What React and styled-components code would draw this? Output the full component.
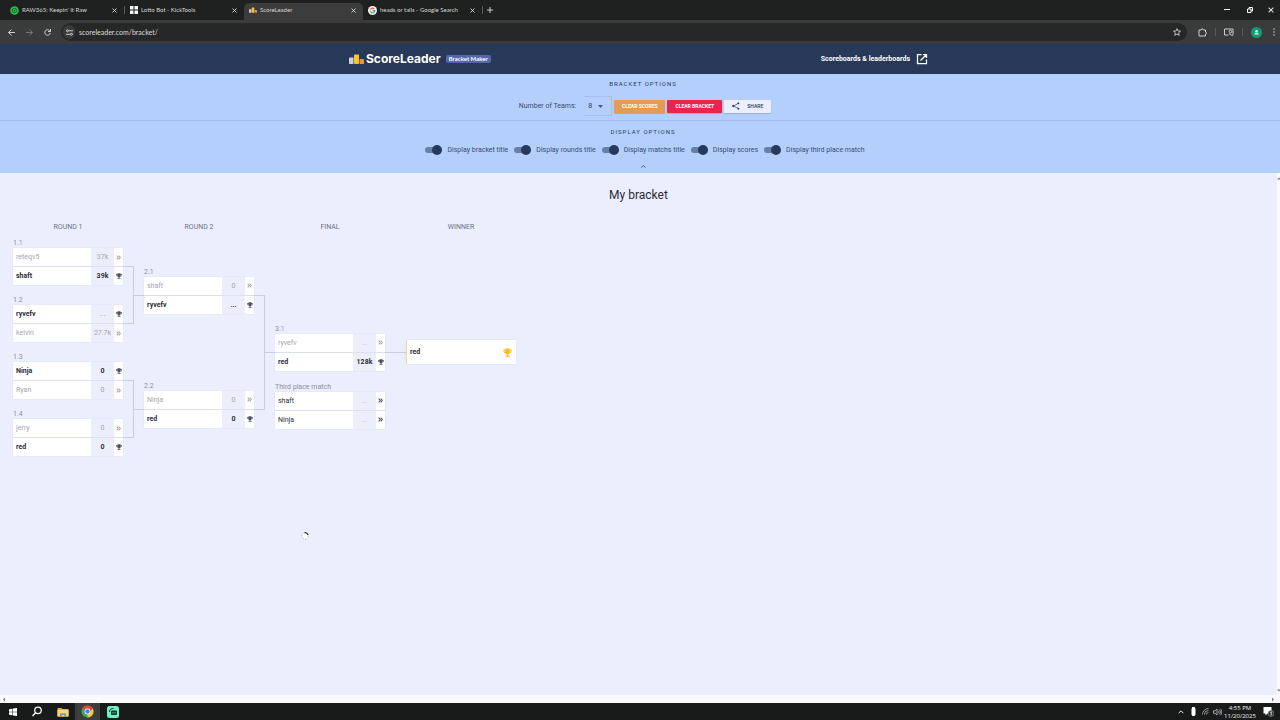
import React, { useState } from 'react';
import styled, { createGlobalStyle } from 'styled-components';

const GlobalStyle = createGlobalStyle`
  *, *::before, *::after {
    box-sizing: border-box;
  }

  body {
    margin: 0;
    font-family: Roboto, "Liberation Sans", sans-serif;
    font-size: 7px;
    line-height: 10px;
    color: #2b3a5c;
    background-color: #ebeefd;
  }

  button, input, select {
    font: inherit;
    color: inherit;
    margin: 0;
    padding: 0;
    border: 0;
    background: none;
  }

  a {
    color: inherit;
    text-decoration: none;
  }
`;

const Page = styled.div`
  display: flex;
  flex-direction: column;
  min-height: 100vh;
`;

/* browser chrome */

const TabStrip = styled.div`
  display: flex;
  align-items: stretch;
  height: 20px;
  padding-left: 5px;
  background-color: #1e2120;
  font-family: Lato, "Open Sans", sans-serif;
  color: #d6d6d6;
`;

const Tab = styled.div`
  display: flex;
  align-items: center;
  width: 119px;
  margin-top: 3px;
  padding: 0 6px 3px 5px;
  gap: 3px;
  border-radius: 5px 5px 0 0;
  background-color: ${props => props.$active ? '#3c3c3c' : 'transparent'};
`;

const TabTitle = styled.span`
  flex: 1;
  font-size: 6px;
  white-space: nowrap;
  overflow: hidden;
`;

const ChromeButton = styled.button`
  display: flex;
  align-items: center;
  justify-content: center;
  width: ${props => props.$width || 8}px;
  color: ${props => props.$dim ? '#7c7c7c' : '#dcdcdc'};
`;

const WindowButtons = styled.div`
  display: flex;
  margin-left: auto;
`;

const Toolbar = styled.div`
  display: flex;
  align-items: center;
  height: 24px;
  padding: 0 2px;
  background-color: #3b3b3b;
  color: #dcdcdc;
`;

const NavButtons = styled.div`
  display: flex;
  width: 59px;
`;

const AddressBar = styled.div`
  display: flex;
  align-items: center;
  flex: 1;
  height: 18px;
  padding: 0 2px;
  border-radius: 9px;
  background-color: #282727;
`;

const SiteInfo = styled.button`
  display: flex;
  align-items: center;
  justify-content: center;
  width: 12px;
  height: 14px;
  margin-right: 4px;
  border-radius: 7px;
  background-color: #3a3a3a;
`;

const AddressInput = styled.input`
  flex: 1;
  min-width: 0;
  font-family: Lato, "Open Sans", sans-serif;
  font-size: 7px;
  outline: none;
`;

const ToolbarActions = styled.div`
  display: flex;
  align-items: center;
  padding-left: 2px;
`;

const Separator = styled.span`
  width: 1px;
  height: 8px;
  align-self: center;
  background-color: #5a5a5a;
`;

/* site header */

const Header = styled.header`
  display: flex;
  justify-content: center;
  height: 30px;
  padding-right: 3px;
  background-color: #283858;
  color: white;
`;

const HeaderInner = styled.div`
  display: flex;
  align-items: center;
  justify-content: space-between;
  width: 100%;
  max-width: 579px;
`;

const Brand = styled.a`
  display: flex;
  align-items: center;
  gap: 2px;
`;

const BrandName = styled.span`
  font-family: Inter, sans-serif;
  font-size: 12px;
  font-weight: 700;
  line-height: 16px;
`;

const BrandBadge = styled.span`
  margin-left: 3px;
  padding: 0 3px;
  border-radius: 2px;
  background-color: #5566ab;
  font-family: Lato, "Open Sans", sans-serif;
  font-size: 6px;
  font-weight: 700;
  line-height: 8px;
`;

const HeaderLink = styled.a`
  display: flex;
  align-items: center;
  gap: 6px;
  font-weight: 700;
`;

/* options */

const Options = styled.section`
  display: flex;
  flex-direction: column;
  background-color: #b4cffc;
`;

const OptionsGroup = styled.div`
  display: flex;
  flex-direction: column;
  align-items: center;
  padding: ${props => props.$last ? 6 : 5}px 0 0 10px;
  border-bottom: ${props => props.$last ? '0' : '1px solid #a0bbe6'};
`;

const OptionsTitle = styled.h2`
  margin: 0;
  padding-right: 4px;
  font-size: 6px;
  font-weight: 400;
  letter-spacing: 1px;
  text-transform: uppercase;
`;

const OptionsRow = styled.div`
  display: flex;
  align-items: center;
  height: ${props => props.$tall ? 20 : 14}px;
  margin-top: ${props => props.$tall ? 7 : 6}px;
  margin-bottom: ${props => props.$tall ? 4 : 3}px;
  gap: ${props => props.$tall ? 2 : 6}px;
`;

const TeamsLabel = styled.label`
  margin-right: 5px;
  color: #3d4c6e;
`;

const TeamsSelect = styled.div`
  display: flex;
  align-items: center;
  width: 29px;
  height: 20px;
  padding: 0 8px 0 4px;
  border: 1px solid #a5bfea;
  border-left-color: transparent;

  select {
    appearance: none;
    flex: 1;
    outline: none;
  }
`;

const ActionButton = styled.button`
  display: flex;
  align-items: center;
  justify-content: center;
  gap: 7px;
  width: ${props => props.$width}px;
  height: 13px;
  border-radius: 1px;
  background-color: ${props => props.$color};
  color: ${props => props.$dark ? '#2b3a5c' : 'white'};
  font-size: 5px;
  font-weight: ${props => props.$dark ? 500 : 700};
  text-transform: uppercase;
  box-shadow: 0 1px 1px rgba(40, 56, 88, 0.2);
`;

const ToggleLabel = styled.label`
  display: flex;
  align-items: center;
  gap: 5px;
  color: #3d4c6e;
`;

const Toggle = styled.input`
  appearance: none;
  position: relative;
  width: 17px;
  height: 10px;
  border-radius: 5px;

  &::before {
    content: '';
    position: absolute;
    top: 2px;
    left: 0;
    width: 16px;
    height: 6px;
    border-radius: 3px;
    background-color: #6680aa;
  }

  &::after {
    content: '';
    position: absolute;
    top: 0;
    left: 0;
    width: 10px;
    height: 10px;
    border-radius: 5px;
    background-color: #e9eefb;
  }

  &:checked::after {
    left: 7px;
    background-color: #263a5e;
  }
`;

const CollapseButton = styled.button`
  display: flex;
  align-items: center;
  justify-content: center;
  height: 13px;
  padding-right: 4px;
`;

/* bracket */

const Scroller = styled.div`
  display: flex;
  flex: 1;
`;

const Main = styled.main`
  flex: 1;
  min-width: 0;
  padding: 14px 13px;
`;

const BracketTitle = styled.h1`
  margin: 0;
  font-size: 12px;
  font-weight: 400;
  line-height: 16px;
  text-align: center;
  color: #2a2c36;
`;

const Bracket = styled.div`
  display: grid;
  grid-template-columns: 110px 21px 110px 21px 110px 21px 110px;
  grid-template-rows: 10px 228px;
  row-gap: 6px;
  margin-top: 19px;
`;

const RoundTitle = styled.h3`
  grid-column: ${props => props.$column};
  grid-row: 1;
  margin: 0;
  font-size: 7px;
  font-weight: 400;
  text-align: center;
  text-transform: uppercase;
  color: #6d7183;
`;

const Round = styled.div`
  display: flex;
  flex-direction: column;
  grid-row: 2;
  grid-column: ${props => props.$column};
`;

const Slot = styled.div`
  display: grid;
  flex: 1;
  grid-template-rows: 1fr auto 1fr;
`;

const MatchLabel = styled.span`
  align-self: ${props => props.$top ? 'start' : 'end'};
  color: #8b8fa0;
`;

const ThirdPlace = styled.div`
  display: flex;
  flex-direction: column;
  height: 0;
  padding-top: 11px;
`;

const MatchCard = styled.div`
  display: flex;
  flex-direction: column;
  flex-shrink: 0;
  gap: 1px;
  border-radius: 2px;
  background-color: #dde0ee;
  box-shadow: 0 0 1px rgba(60, 70, 110, 0.3);
`;

const TeamRow = styled.div`
  display: grid;
  grid-template-columns: 1fr 23px 9px;
  height: 18px;
  background-color: white;
  color: ${props => props.$state === 'lost' ? '#a3a5ad' : '#2c2e37'};
  font-weight: ${props => props.$state === 'won' ? 700 : 400};
`;

const TeamInput = styled.input`
  min-width: 0;
  padding-left: 3px;
  outline: none;
`;

const ScoreInput = styled.input`
  min-width: 0;
  text-align: center;
  outline: none;
  background-color: #eceefb;

  &::placeholder {
    color: ${props => props.$faint ? '#b9bccb' : '#2c2e37'};
  }
`;

const AdvanceButton = styled.button`
  display: flex;
  align-items: center;
  justify-content: center;
  color: #4a4f68;
  opacity: ${props => props.$faded ? 0.5 : 1};
`;

const WinnerCard = styled.div`
  display: flex;
  align-items: center;
  height: 24px;
  padding-right: 4px;
  border-left: 1px solid #f0d890;
  border-radius: 1px;
  background-color: white;
  color: #2c2e37;
  font-weight: 700;
  box-shadow: 0 0 1px rgba(60, 70, 110, 0.3);

  input {
    flex: 1;
  }

  svg {
    color: #f3bd2e;
  }
`;

const Links = styled.div`
  display: flex;
  flex-direction: column;
  grid-row: 2;
  grid-column: ${props => props.$column};
`;

const Link = styled.div`
  display: flex;
  flex: 1;
  align-items: center;

  &::before {
    content: '';
    width: 11px;
    height: ${props => props.$single ? '1px' : 'calc(50% + 1px)'};
    border: 1px solid #c8cee0;
    border-left: 0;
    ${props => props.$single ? 'border-width: 1px 0 0 0;' : ''}
  }

  &::after {
    content: '';
    flex: 1;
    height: 1px;
    background-color: #c8cee0;
  }
`;

const BusyCursor = styled.div`
  position: absolute;
  top: 532px;
  left: 301px;
  line-height: 0;
`;

const VerticalBar = styled.div`
  display: flex;
  flex-direction: column;
  justify-content: space-between;
  align-items: center;
  width: 3px;
  padding: 3px 0 2px;
  background-color: #fafafd;
`;

const HorizontalBar = styled.div`
  display: flex;
  justify-content: space-between;
  align-items: center;
  height: 8px;
  padding: 0 5px 0 2px;
  background-color: #fafafd;
`;

/* taskbar */

const Taskbar = styled.footer`
  display: flex;
  align-items: center;
  height: 17px;
  background-color: #191a1a;
  color: #f2f2f2;
  overflow: hidden;
`;

const TaskButton = styled.button`
  display: flex;
  align-items: center;
  justify-content: center;
  width: 25px;
  height: 17px;
  background-color: ${props => props.$active ? '#3c3d3d' : 'transparent'};
`;

const Tray = styled.div`
  display: flex;
  align-items: center;
  margin-left: auto;
  padding-right: 6px;
`;

const TrayIcon = styled.span`
  display: flex;
  justify-content: center;
  width: 12px;
`;

const Clock = styled.div`
  width: 34px;
  margin-right: 6px;
  font-family: "Open Sans", sans-serif;
  font-size: 6px;
  line-height: 8px;
  text-align: center;
`;

const CloseIcon = ({ size = 5 }) => (
  <svg width={size} height={size} viewBox="0 0 10 10" stroke="currentColor" strokeWidth="1.8">
    <path d="M1 1l8 8M9 1l-8 8" />
  </svg>
);

const PodiumIcon = ({ width = 15, height = 10 }) => (
  <svg width={width} height={height} viewBox="0 0 30 20">
    <rect x="0" y="7" width="9" height="13" rx="1.5" fill="#cfd2d8" />
    <rect x="10" y="1" width="10" height="19" rx="1.5" fill="#f7c52b" />
    <rect x="21" y="10" width="9" height="10" rx="1.5" fill="#e8953f" />
  </svg>
);

const TrophyIcon = ({ size = 6 }) => (
  <svg width={size} height={size} viewBox="0 0 24 24" fill="currentColor">
    <path d="M6 1h12v3h5v3c0 4-2 6-5.500 6.500C16.500 15.500 15 17 13.500 17.300V20H18v3H6v-3h4.500v-2.700C9 17 7.500 15.500 6.500 13.500 3 13 1 11 1 7V4h5V1zM3.500 6.500c0 2.200.8 3.600 2.500 4.200V6.500zm17 0H18v4.200c1.700-.6 2.500-2 2.500-4.200z" />
  </svg>
);

const ChevronsIcon = () => (
  <svg width="5" height="5" viewBox="0 0 24 24" fill="none" stroke="currentColor" strokeWidth="5">
    <path d="M3 3l8 9-8 9M13 3l8 9-8 9" />
  </svg>
);

const CaretIcon = ({ width = 5, height = 3 }) => (
  <svg width={width} height={height} viewBox="0 0 10 6" fill="none" stroke="currentColor" strokeWidth="1.600">
    <path d="M1 5l4-4 4 4" />
  </svg>
);

const Arrow = ({ d }) => (
  <svg width="4" height="5" viewBox="0 0 8 10" fill="#777983"><path d={d} /></svg>
);

const GoogleIcon = () => (
  <svg width="9" height="9" viewBox="0 0 18 18">
    <circle cx="9" cy="9" r="9" fill="#f4f4f4" />
    <g fill="none" strokeWidth="2.200">
      <path d="M12.500 5.700A4.700 4.700 0 0 0 5 6.700" stroke="#e25042" />
      <path d="M5 6.700a4.700 4.700 0 0 0 0 4.600" stroke="#eabb3a" />
      <path d="M5 11.300a4.700 4.700 0 0 0 7 1.600" stroke="#4ea65a" />
      <path d="M12 12.900c1.200-1 1.600-2.300 1.600-3.700H9" stroke="#4b80e0" />
    </g>
  </svg>
);

const ChromeIcon = () => (
  <svg width="13" height="13" viewBox="0 0 26 26">
    <circle cx="13" cy="13" r="12" fill="#43a457" />
    <path d="M13 13L2.600 7A12 12 0 0 1 23.400 7z" fill="#e0463c" />
    <path d="M13 13L23.400 7A12 12 0 0 1 13 25z" fill="#f4c63c" />
    <path d="M8 7h15.400L18 13z" fill="#e0463c" />
    <circle cx="13" cy="13" r="5.800" fill="white" />
    <circle cx="13" cy="13" r="4.400" fill="#4184ea" />
  </svg>
);

const tabs = [
  {
    title: "RAW365: Keepin' It Raw",
    icon: (
      <svg width="9" height="9" viewBox="0 0 18 18" fill="none">
        <circle cx="9" cy="9" r="8.500" fill="#27c24c" />
        <circle cx="9" cy="9" r="4.500" stroke="#0c4a1c" strokeWidth="1.500" />
        <circle cx="9" cy="9" r="1.500" fill="#0c4a1c" />
      </svg>
    ),
  },
  {
    title: 'Lotto Bot - KickTools',
    icon: (
      <svg width="8" height="8" viewBox="0 0 16 16" fill="#f5f5f5">
        <path d="M0 0h7v7H0zM9 0h7v7H9zM0 9h7v7H0zM9 9h7v7H9z" />
      </svg>
    ),
  },
  { title: 'ScoreLeader', icon: <PodiumIcon width={8} height={6} />, active: true },
  { title: 'heads or tails - Google Search', icon: <GoogleIcon /> },
];

const toggles = [
  'Display bracket title',
  'Display rounds title',
  'Display matchs title',
  'Display scores',
  'Display third place match',
];

const rounds = [
  {
    title: 'Round 1',
    matches: [
      { label: '1.1', teams: [['reteqv5', '37k', 'lost'], ['shaft', '39k', 'won']] },
      { label: '1.2', teams: [['ryvefv', '', 'won', true], ['kelvin', '27.7k', 'lost']] },
      { label: '1.3', teams: [['Ninja', '0', 'won'], ['Ryan', '0', 'lost']] },
      { label: '1.4', teams: [['jerry', '0', 'lost'], ['red', '0', 'won']] },
    ],
  },
  {
    title: 'Round 2',
    matches: [
      { label: '2.1', teams: [['shaft', '0', 'lost'], ['ryvefv', '', 'won']] },
      { label: '2.2', teams: [['Ninja', '0', 'lost'], ['red', '0', 'won']] },
    ],
  },
  {
    title: 'Final',
    matches: [
      { label: '3.1', teams: [['ryvefv', '', 'lost', true], ['red', '128k', 'won']] },
    ],
  },
];

const thirdPlace = {
  label: 'Third place match',
  teams: [['shaft', '', 'open', true], ['Ninja', '', 'open', true]],
};

const Match = ({ match }) => (
  <MatchCard>
    {match.teams.map(([name, score, state, faint]) => (
      <TeamRow key={name} $state={state}>
        <TeamInput aria-label="Team name" defaultValue={name} />
        <ScoreInput aria-label="Score" placeholder="..." defaultValue={score} $faint={faint} />
        <AdvanceButton aria-label="Set winner" $faded={state === 'lost'}>
          {state === 'won' ? <TrophyIcon /> : <ChevronsIcon />}
        </AdvanceButton>
      </TeamRow>
    ))}
  </MatchCard>
);

const BrowserChrome = () => (
  <div>
    <TabStrip>
      {tabs.map((tab, i) => (
        <React.Fragment key={tab.title}>
          <Tab $active={tab.active}>
            {tab.icon}
            <TabTitle>{tab.title}</TabTitle>
            <ChromeButton aria-label="Close tab"><CloseIcon /></ChromeButton>
          </Tab>
          {(i === 0 || i === 3) && <Separator />}
        </React.Fragment>
      ))}
      <ChromeButton aria-label="New tab" $width={14}>
        <svg width="6" height="6" viewBox="0 0 12 12" stroke="currentColor" strokeWidth="1.800"><path d="M6 0v12M0 6h12" /></svg>
      </ChromeButton>
      <WindowButtons>
        <ChromeButton aria-label="Minimize" $width={23}>
          <svg width="6" height="2" viewBox="0 0 6 2"><rect width="6" height="1" fill="white" /></svg>
        </ChromeButton>
        <ChromeButton aria-label="Restore" $width={23}>
          <svg width="6" height="6" viewBox="0 0 12 12" fill="none" stroke="white" strokeWidth="2"><path d="M1 4h7v7H1zM4 4V1h7v7H8" /></svg>
        </ChromeButton>
        <ChromeButton aria-label="Close window" $width={19}><CloseIcon size={6} /></ChromeButton>
      </WindowButtons>
    </TabStrip>
    <Toolbar>
      <NavButtons>
        <ChromeButton aria-label="Back" $width={18}>
          <svg width="7" height="7" viewBox="0 0 14 14" fill="none" stroke="currentColor" strokeWidth="1.800"><path d="M14 7H1M7 1L1 7l6 6" /></svg>
        </ChromeButton>
        <ChromeButton aria-label="Forward" $width={18} $dim>
          <svg width="7" height="7" viewBox="0 0 14 14" fill="none" stroke="currentColor" strokeWidth="1.800"><path d="M0 7h13M7 1l6 6-6 6" /></svg>
        </ChromeButton>
        <ChromeButton aria-label="Reload" $width={18}>
          <svg width="7" height="7" viewBox="0 0 14 14" fill="none" stroke="currentColor" strokeWidth="1.800"><path d="M12.500 8A5.500 5.500 0 1 1 11 3l2 2M13 0v5H8" /></svg>
        </ChromeButton>
      </NavButtons>
      <AddressBar>
        <SiteInfo aria-label="Site information">
          <svg width="7" height="7" viewBox="0 0 14 14" fill="none" stroke="currentColor" strokeWidth="1.800">
            <path d="M6 3.500h8M0 10.500h8" /><circle cx="3" cy="3.500" r="2" /><circle cx="11" cy="10.500" r="2" />
          </svg>
        </SiteInfo>
        <AddressInput aria-label="Address" defaultValue="scoreleader.com/bracket/" />
        <ChromeButton aria-label="Bookmark" $width={17}>
          <svg width="8" height="8" viewBox="0 0 24 24" fill="none" stroke="currentColor" strokeWidth="2.500"><path d="M12 2l3 7 7.500.6-5.700 5 1.800 7.400L12 18l-6.600 4 1.800-7.400-5.700-5L9 9z" /></svg>
        </ChromeButton>
      </AddressBar>
      <ToolbarActions>
        <ChromeButton aria-label="Extensions" $width={26}>
          <svg width="9" height="9" viewBox="0 0 18 18" fill="none" stroke="currentColor" strokeWidth="1.800"><path d="M2 4h4c0-3 5-3 5 0h4v4c2.500 0 2.500 4 0 4v4H2z" /></svg>
        </ChromeButton>
        <Separator />
        <ChromeButton aria-label="Media" $width={26}>
          <svg width="10" height="8" viewBox="0 0 20 16" fill="none" stroke="currentColor" strokeWidth="1.800"><path d="M9 14H1V2h17v12" /><circle cx="13" cy="7" r="2.500" /><path d="M10 11l8 5" /></svg>
        </ChromeButton>
        <Separator />
        <ChromeButton aria-label="Profile" $width={26}>
          <svg width="11" height="11" viewBox="0 0 22 22"><circle cx="11" cy="11" r="11" fill="#149a72" /><circle cx="11" cy="8.500" r="2.500" fill="#d5f1e6" /><path d="M6.500 15c0-4.500 9-4.500 9 0z" fill="#d5f1e6" /></svg>
        </ChromeButton>
        <ChromeButton aria-label="Menu" $width={9}>
          <svg width="2" height="8" viewBox="0 0 4 16" fill="currentColor"><circle cx="2" cy="2" r="1.500" /><circle cx="2" cy="8" r="1.500" /><circle cx="2" cy="14" r="1.500" /></svg>
        </ChromeButton>
      </ToolbarActions>
    </Toolbar>
  </div>
);

const OptionsPanel = () => {
  const [teams, setTeams] = useState('8');

  return (
    <Options>
      <OptionsGroup>
        <OptionsTitle>Bracket options</OptionsTitle>
        <OptionsRow $tall>
          <TeamsLabel htmlFor="teams">Number of Teams:</TeamsLabel>
          <TeamsSelect>
            <select id="teams" value={teams} onChange={e => setTeams(e.target.value)}>
              <option>4</option>
              <option>8</option>
              <option>16</option>
            </select>
            <svg width="5" height="3" viewBox="0 0 10 6" fill="#4b5a7c"><path d="M0 0h10L5 6z" /></svg>
          </TeamsSelect>
          <ActionButton $width={51} $color="#e39b56">Clear scores</ActionButton>
          <ActionButton $width={55} $color="#e8254f">Clear bracket</ActionButton>
          <ActionButton $width={47} $color="#ebeefd" $dark>
            <svg width="8" height="8" viewBox="0 0 24 24" fill="currentColor" stroke="currentColor" strokeWidth="2">
              <path d="M19 4L5 12l14 8" fill="none" /><circle cx="19" cy="4" r="2" /><circle cx="4" cy="12" r="2.500" /><circle cx="19" cy="20" r="2" />
            </svg>
            Share
          </ActionButton>
        </OptionsRow>
      </OptionsGroup>
      <OptionsGroup $last>
        <OptionsTitle>Display options</OptionsTitle>
        <OptionsRow>
          {toggles.map(label => (
            <ToggleLabel key={label}>
              <Toggle type="checkbox" defaultChecked />
              {label}
            </ToggleLabel>
          ))}
        </OptionsRow>
        <CollapseButton aria-label="Collapse options"><CaretIcon /></CollapseButton>
      </OptionsGroup>
    </Options>
  );
};

const BracketView = () => (
  <Bracket>
    {rounds.map((round, i) => (
      <React.Fragment key={round.title}>
        <RoundTitle $column={i * 2 + 1}>{round.title}</RoundTitle>
        <Round $column={i * 2 + 1}>
          {round.matches.map(match => (
            <Slot key={match.label}>
              <MatchLabel>{match.label}</MatchLabel>
              <Match match={match} />
              {round.title === 'Final' && (
                <ThirdPlace>
                  <MatchLabel $top>{thirdPlace.label}</MatchLabel>
                  <Match match={thirdPlace} />
                </ThirdPlace>
              )}
            </Slot>
          ))}
        </Round>
        <Links $column={i * 2 + 2}>
          {round.matches.length === 1
            ? <Link $single />
            : round.matches.slice(0, round.matches.length / 2).map(match => <Link key={match.label} />)}
        </Links>
      </React.Fragment>
    ))}
    <RoundTitle $column={7}>Winner</RoundTitle>
    <Round $column={7}>
      <Slot>
        <span />
        <WinnerCard>
          <TeamInput aria-label="Winner" defaultValue="red" />
          <TrophyIcon size={9} />
        </WinnerCard>
      </Slot>
    </Round>
  </Bracket>
);

const SystemTaskbar = () => (
  <Taskbar>
    <TaskButton aria-label="Start">
      <svg width="8" height="8" viewBox="0 0 16 16" fill="white"><path d="M0 2.300l7-1v6.200H0zM8 1.200L16 0v7.500H8zM0 8.500h7v6.200l-7-1zM8 8.500h8V16l-8-1.200z" /></svg>
    </TaskButton>
    <TaskButton aria-label="Search">
      <svg width="11" height="11" viewBox="0 0 22 22" fill="none" stroke="white" strokeWidth="2.500"><circle cx="12" cy="8.500" r="6.500" /><path d="M7.500 13L1 20" /></svg>
    </TaskButton>
    <TaskButton aria-label="File Explorer">
      <svg width="12" height="10" viewBox="0 0 24 20"><path d="M1 2h8l2 2h12v15H1z" fill="#dcae3e" /><path d="M1 6h22v13H1z" fill="#f3d778" /><path d="M6 19v-6h12v6h-3v-3H9v3z" fill="#5a97b8" /></svg>
    </TaskButton>
    <TaskButton aria-label="Chrome" $active><ChromeIcon /></TaskButton>
    <TaskButton aria-label="Streamlabs">
      <svg width="12" height="12" viewBox="0 0 24 24" fill="none"><rect width="24" height="24" rx="5" fill="#6ff0c4" /><path d="M5 12c0-5 3-7 8-7" stroke="#0e3a32" strokeWidth="2" /><rect x="8" y="9" width="12" height="9" rx="2" fill="#0e3a32" /><path d="M12 12v3M16 12v3" stroke="#6ff0c4" strokeWidth="1.500" /></svg>
    </TaskButton>
    <Tray>
      <TrayIcon><CaretIcon width={6} height={4} /></TrayIcon>
      <TrayIcon><svg width="5" height="9" viewBox="0 0 10 18" fill="white"><path d="M2 0h6v3h1v12l-2 3H3l-2-3V3h1z" /></svg></TrayIcon>
      <TrayIcon><svg width="7" height="7" viewBox="0 0 14 14" fill="none" stroke="#b8b8b8" strokeWidth="1.500"><path d="M1 13A12 12 0 0 1 13 1M5 13a8 8 0 0 1 8-8M9 13a4 4 0 0 1 4-4" /></svg></TrayIcon>
      <TrayIcon><svg width="9" height="8" viewBox="0 0 18 16" fill="none" stroke="#dddddd" strokeWidth="1.400"><path d="M1 5.500h3L8 2v12l-4-3.500H1zM10.500 5.500c1.500 1.500 1.500 3.500 0 5M12.500 3.500c3 2.500 3 6.500 0 9M14.500 1.500c4 4 4 9 0 13" /></svg></TrayIcon>
      <Clock>4:55 PM<br />11/20/2025</Clock>
      <svg width="11" height="11" viewBox="0 0 22 22"><path d="M1 2h16v13H9l-4 4v-4H1z" fill="white" /><circle cx="16" cy="15" r="6" fill="#333" stroke="#bbb" /><path d="M14.500 13l2-1.500V19" stroke="white" strokeWidth="1.500" fill="none" /></svg>
    </Tray>
  </Taskbar>
);

function App() {
  return (
    <Page>
      <GlobalStyle />
      <BrowserChrome />
      <Header>
        <HeaderInner>
          <Brand href="/">
            <PodiumIcon />
            <BrandName>ScoreLeader</BrandName>
            <BrandBadge>Bracket Maker</BrandBadge>
          </Brand>
          <HeaderLink href="/scoreboards">
            Scoreboards &amp; leaderboards
            <svg width="12" height="12" viewBox="0 0 24 24" fill="none" stroke="white" strokeWidth="2.500"><path d="M11 3H3v18h18v-8M14 3h7v7M21 3L9 15" /></svg>
          </HeaderLink>
        </HeaderInner>
      </Header>
      <OptionsPanel />
      <Scroller>
        <Main>
          <BracketTitle>My bracket</BracketTitle>
          <BracketView />
        </Main>
        <VerticalBar>
          <Arrow d="M0 7l4-4 4 4z" />
          <Arrow d="M0 3l4 4 4-4z" />
        </VerticalBar>
      </Scroller>
      <BusyCursor>
        <svg width="8" height="8" viewBox="0 0 16 16" fill="none">
          <circle cx="8" cy="8" r="6.500" fill="white" stroke="#8a8fa2" strokeWidth="1.500" strokeDasharray="2 2" />
          <path d="M7 1.500a6.500 6.500 0 0 1 7 4.500" stroke="#33363f" strokeWidth="2.500" />
        </svg>
      </BusyCursor>
      <HorizontalBar>
        <Arrow d="M6 1L2 5l4 4z" />
        <Arrow d="M2 1l4 4-4 4z" />
      </HorizontalBar>
      <SystemTaskbar />
    </Page>
  );
}

export default App;
